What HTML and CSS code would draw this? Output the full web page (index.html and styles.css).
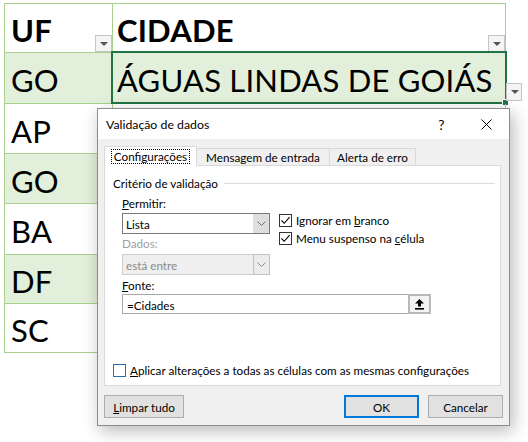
FILE: index.html
```html
<!DOCTYPE html>
<html lang="pt-BR">
<head>
    <meta charset="UTF-8">
    <title>Validação de dados</title>
    <link rel="stylesheet" href="styles.css">
</head>
<body>
    <div class="sheet">
        <div class="cell head">UF<span class="filter"></span></div>
        <div class="cell head">CIDADE<span class="filter"></span></div>
        <div class="cell band">GO</div>
        <div class="cell band active">ÁGUAS LINDAS DE GOIÁS
            <span class="cursor"><span class="handle"></span></span>
            <span class="list-drop"></span>
        </div>
        <div class="cell">AP</div>
        <div class="cell"></div>
        <div class="cell band">GO</div>
        <div class="cell band"></div>
        <div class="cell">BA</div>
        <div class="cell"></div>
        <div class="cell band">DF</div>
        <div class="cell band"></div>
        <div class="cell">SC</div>
        <div class="cell"></div>
    </div>

    <div class="dialog">
        <div class="dialog-title">
            <span class="title-text">Validação de dados</span>
            <span class="title-btn">?</span>
            <span class="title-btn">
                <svg width="11" height="11" viewBox="0 0 11 11"><path d="M0.5 0.5 L10.5 10.5 M10.5 0.5 L0.5 10.5" stroke="#000" stroke-width="1" fill="none"/></svg>
            </span>
        </div>

        <div class="dialog-body">
            <div class="tabs">
                <div class="tab tab-on"><span class="focus">Configurações</span></div>
                <div class="tab tab-msg">Mensagem de entrada</div>
                <div class="tab tab-err">Alerta de erro</div>
            </div>

            <div class="panel">
                <div class="legend">Critério de validação</div>

                <div class="fields">
                    <div class="col-left">
                        <div class="lbl lbl-first"><u>P</u>ermitir:</div>
                        <div class="combo">
                            <span class="combo-text">Lista</span>
                            <span class="combo-arrow">
                                <svg width="9" height="6" viewBox="0 0 9 6"><path d="M0.5 0.5 L4.5 4.5 L8.5 0.5" stroke="#6d6d6d" fill="none"/></svg>
                            </span>
                        </div>
                        <div class="lbl lbl-off">Dados:</div>
                        <div class="combo combo-off">
                            <span class="combo-text">está entre</span>
                            <span class="combo-arrow">
                                <svg width="9" height="6" viewBox="0 0 9 6"><path d="M0.5 0.5 L4.5 4.5 L8.5 0.5" stroke="#8a8a8a" fill="none"/></svg>
                            </span>
                        </div>
                    </div>
                    <div class="col-right">
                        <div class="check-row">
                            <span class="box">
                                <svg width="11" height="11" viewBox="0 0 11 11"><path d="M1.5 5.5 L4.2 8.3 L9.6 2.2" stroke="#000" stroke-width="1.1" fill="none"/></svg>
                            </span>
                            <span>Ignorar em <u>b</u>ranco</span>
                        </div>
                        <div class="check-row">
                            <span class="box">
                                <svg width="11" height="11" viewBox="0 0 11 11"><path d="M1.5 5.5 L4.2 8.3 L9.6 2.2" stroke="#000" stroke-width="1.1" fill="none"/></svg>
                            </span>
                            <span>Menu suspenso na <u>c</u>élula</span>
                        </div>
                    </div>
                </div>

                <div class="lbl lbl-source"><u>F</u>onte:</div>
                <div class="source-row">
                    <div class="source-input">=Cidades</div>
                    <div class="pick-btn">
                        <svg width="9" height="11" viewBox="0 0 9 11"><path d="M4.5 0 L9 4.6 H6 V7.6 H3 V4.6 H0 Z" fill="#000"/><rect x="0" y="9" width="9" height="1.6" fill="#000"/></svg>
                    </div>
                </div>

                <div class="check-row apply-row">
                    <span class="box box-blue"></span>
                    <span><u>A</u>plicar alterações a todas as células com as mesmas configurações</span>
                </div>
            </div>

            <div class="buttons">
                <button class="btn btn-clear"><u>L</u>impar tudo</button>
                <button class="btn btn-ok">OK</button>
                <button class="btn">Cancelar</button>
            </div>
        </div>
    </div>
</body>
</html>
```

FILE: styles.css
```css
* {
    box-sizing: border-box;
}

html, body {
    margin: 0;
    background-color: #fff;
}

body {
    position: relative;
    width: 528px;
    height: 442px;
    overflow: hidden;
    font-family: Lato, "Noto Sans", sans-serif;
}

/* spreadsheet */
.sheet {
    display: grid;
    grid-template-columns: 108px 393px;
    grid-template-rows: 49px 51px 50px 50px 51px 49px 49px;
    width: max-content;
    margin: 3px 0 0 4px;
    border-top: 1px solid #a9d08e;
    border-left: 1px solid #a9d08e;
}

.cell {
    position: relative;
    display: flex;
    align-items: center;
    padding: 4px 0 0 6px;
    border-right: 1px solid #a9d08e;
    border-bottom: 1px solid #a9d08e;
    font-size: 31px;
    letter-spacing: 0.2px;
    color: #000;
    white-space: nowrap;
}

.cell:nth-child(even) {
    padding-left: 4px;
}

.head {
    font-weight: bold;
}

.band {
    background-color: #e2efda;
}

.filter {
    position: absolute;
    right: 0;
    bottom: 0;
    width: 17px;
    height: 17px;
    background-color: #f4f4f4;
    border: 1px solid #c6c6c6;
}

.filter::after,
.list-drop::after {
    content: "";
    position: absolute;
    left: 4px;
    top: 6px;
    border-left: 4px solid transparent;
    border-right: 4px solid transparent;
    border-top: 4px solid #555;
}

.cursor {
    position: absolute;
    top: -2px;
    left: -2px;
    right: -2px;
    bottom: -1px;
    border: 2px solid #217346;
}

.handle {
    position: absolute;
    right: -4px;
    bottom: -4px;
    width: 7px;
    height: 7px;
    background-color: #217346;
    border: 1px solid #fff;
}

.list-drop {
    position: absolute;
    right: -17px;
    bottom: 2px;
    width: 16px;
    height: 18px;
    background-color: #f4f4f4;
    border: 1px solid #c6c6c6;
}

/* dialog */
.dialog {
    position: absolute;
    left: 97px;
    top: 108px;
    width: 413px;
    height: 318px;
    display: flex;
    flex-direction: column;
    background-color: #f0f0f0;
    border: 1px solid #8c8c8c;
    box-shadow: 3px 5px 16px rgba(0, 0, 0, 0.28);
    font-size: 11.7px;
    color: #000;
}

.dialog-title {
    display: flex;
    align-items: center;
    height: 30px;
    padding-left: 8px;
    background-color: #fff;
}

.title-text {
    flex: 1;
    font-size: 12.3px;
}

.title-btn {
    display: flex;
    align-items: center;
    justify-content: center;
    width: 45px;
    height: 30px;
    font-size: 14px;
}

.dialog-body {
    display: flex;
    flex-direction: column;
    padding: 7px 6px 7px 6px;
}

.tabs {
    position: relative;
    z-index: 1;
    display: flex;
    align-items: flex-start;
    height: 20px;
}

.tab {
    height: 17px;
    margin-top: 2px;
    display: flex;
    align-items: center;
    justify-content: center;
    border-top: 1px solid #d9d9d9;
    border-right: 1px solid #d9d9d9;
    background-color: #f0f0f0;
    padding-bottom: 1px;
}

.tab-on {
    width: 93px;
    height: 20px;
    margin-top: 0;
    border-left: 1px solid #d9d9d9;
    background-color: #fff;
    padding-top: 1px;
}

.tab-msg {
    width: 133px;
}

.tab-err {
    width: 86px;
}

.focus {
    padding: 0 2px;
    outline: 1px dotted #000;
    line-height: 13px;
}

.panel {
    display: flex;
    flex-direction: column;
    height: 221px;
    margin: -1px 2px 0 0;
    padding: 10px 5px 6px 8px;
    background-color: #fff;
    border: 1px solid #dadada;
}

.legend {
    display: flex;
    align-items: center;
    gap: 6px;
    height: 14px;
}

.legend::after {
    content: "";
    flex: 1;
    height: 1px;
    background-color: #dcdcdc;
}

.fields {
    display: flex;
    margin-left: 9px;
}

.col-left {
    display: flex;
    flex-direction: column;
    width: 148px;
}

.lbl {
    height: 14px;
    line-height: 14px;
}

.lbl-first {
    margin-top: 6px;
}

.lbl-off {
    margin-top: 2px;
    color: #a0a0a0;
}

.combo {
    display: flex;
    height: 21px;
    margin-top: 3px;
    border: 1px solid #7a7a7a;
    background-color: #fff;
}

.combo-text {
    flex: 1;
    padding: 3px 0 0 3px;
}

.combo-arrow {
    display: flex;
    align-items: center;
    justify-content: center;
    width: 16px;
    background-color: #dedede;
}

.combo-off {
    margin-top: 4px;
    border-color: #cccccc;
    background-color: #efefef;
    color: #8a8a8a;
}

.combo-off .combo-arrow {
    margin: -1px -1px -1px 0;
    width: 17px;
    border: 1px solid #c2c2c2;
    background-color: #ececec;
}

.col-right {
    display: flex;
    flex-direction: column;
    margin-left: 9px;
    padding-top: 21px;
}

.check-row {
    display: flex;
    align-items: center;
    gap: 4px;
    height: 18px;
    white-space: nowrap;
}

.box {
    display: flex;
    align-items: center;
    justify-content: center;
    width: 13px;
    height: 13px;
    border: 1px solid #333;
    background-color: #fff;
}

.box-blue {
    border-color: #2f6fb0;
}

.lbl-source {
    margin: 3px 0 0 9px;
}

.source-row {
    display: flex;
    width: 309px;
    height: 20px;
    margin: 2px 0 0 9px;
}

.source-input {
    flex: 1;
    padding: 3px 0 0 4px;
    border: 1px solid #a8a8a8;
    border-right: none;
}

.pick-btn {
    display: flex;
    align-items: center;
    justify-content: center;
    width: 23px;
    border: 2px solid #b9b9b9;
    background-color: #f3f3f3;
}

.apply-row {
    margin-top: auto;
}

.buttons {
    display: flex;
    gap: 9px;
    margin-top: 9px;
}

.btn {
    width: 75px;
    height: 23px;
    padding: 0;
    font-family: inherit;
    font-size: 11.7px;
    color: #000;
    background-color: #e1e1e1;
    border: 1px solid #adadad;
}

.btn-clear {
    width: 80px;
    margin-right: auto;
}

.btn-ok {
    border: 2px solid #0078d7;
}
```
